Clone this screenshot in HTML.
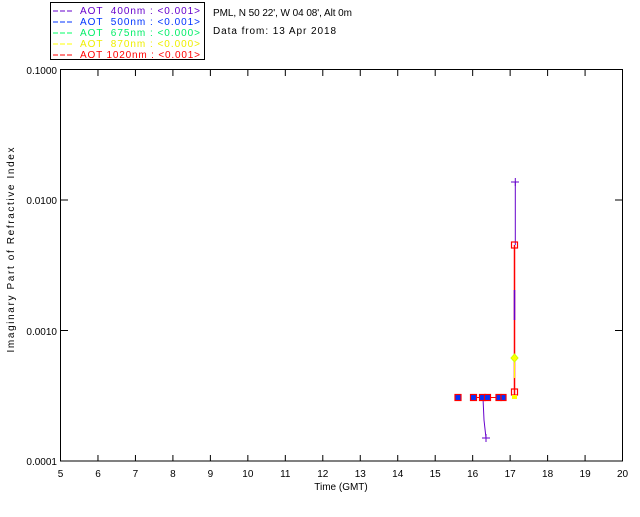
<!DOCTYPE html>
<html><head><style>
body{margin:0;background:#fff}
svg text{font-family:"Liberation Sans",sans-serif;font-size:10px;white-space:pre}
</style></head><body>
<svg width="640" height="512" xmlns="http://www.w3.org/2000/svg">
<rect width="640" height="512" fill="#fff"/>
<!-- legend -->
<rect x="50.5" y="2.5" width="154" height="57" fill="none" stroke="#000"/>
<g font-size="10">
<line x1="53" y1="11" x2="74" y2="11" stroke="#6600cc" stroke-dasharray="5,2"/>
<text x="80" y="14" fill="#6600cc" textLength="120" lengthAdjust="spacing">AOT  400nm : &lt;0.001&gt;</text>
<line x1="53" y1="22" x2="74" y2="22" stroke="#0033ff" stroke-dasharray="5,2"/>
<text x="80" y="25" fill="#0033ff" textLength="120" lengthAdjust="spacing">AOT  500nm : &lt;0.001&gt;</text>
<line x1="53" y1="33" x2="74" y2="33" stroke="#00ff66" stroke-dasharray="5,2"/>
<text x="80" y="36" fill="#00ee66" textLength="120" lengthAdjust="spacing">AOT  675nm : &lt;0.000&gt;</text>
<line x1="53" y1="44" x2="74" y2="44" stroke="#ffff00" stroke-dasharray="5,2"/>
<text x="80" y="47" fill="#eeee00" textLength="120" lengthAdjust="spacing">AOT  870nm : &lt;0.000&gt;</text>
<line x1="53" y1="55" x2="74" y2="55" stroke="#ff0000" stroke-dasharray="5,2"/>
<text x="80" y="58" fill="#ff0000" textLength="120" lengthAdjust="spacing">AOT 1020nm : &lt;0.001&gt;</text>
</g>
<text x="213" y="16" textLength="139" lengthAdjust="spacing">PML, N 50 22', W 04 08', Alt 0m</text>
<text x="213" y="34" textLength="123" lengthAdjust="spacing">Data from: 13 Apr 2018</text>
<!-- axes -->
<rect x="60.5" y="69.5" width="562" height="391.5" fill="none" stroke="#000"/>
<g stroke="#000">
<line x1="60.5" y1="200" x2="68" y2="200"/><line x1="60.5" y1="330.5" x2="68" y2="330.5"/>
<line x1="615" y1="200" x2="622.5" y2="200"/><line x1="615" y1="330.5" x2="622.5" y2="330.5"/>
</g>
<g font-size="10" text-anchor="end">
<text x="57" y="74">0.1000</text><text x="57" y="204">0.0100</text>
<text x="57" y="335">0.0010</text><text x="57" y="465">0.0001</text>
</g>
<g stroke="#000">
<path d="M97.97 461V455M135.44 461V455M172.91 461V455M210.38 461V455M247.85 461V455M285.32 461V455M322.79 461V455M360.26 461V455M397.73 461V455M435.2 461V455M472.67 461V455M510.14 461V455M547.61 461V455M585.08 461V455"/>
<path d="M97.97 69.5V76M135.44 69.5V76M172.91 69.5V76M210.38 69.5V76M247.85 69.5V76M285.32 69.5V76M322.79 69.5V76M360.26 69.5V76M397.73 69.5V76M435.2 69.5V76M472.67 69.5V76M510.14 69.5V76M547.61 69.5V76M585.08 69.5V76"/>
</g>
<g font-size="10" text-anchor="middle">
<text x="60.5" y="477">5</text><text x="97.97" y="477">6</text><text x="135.44" y="477">7</text><text x="172.91" y="477">8</text><text x="210.38" y="477">9</text><text x="247.85" y="477">10</text><text x="285.32" y="477">11</text><text x="322.79" y="477">12</text><text x="360.26" y="477">13</text><text x="397.73" y="477">14</text><text x="435.2" y="477">15</text><text x="472.67" y="477">16</text><text x="510.14" y="477">17</text><text x="547.61" y="477">18</text><text x="585.08" y="477">19</text><text x="622.5" y="477">20</text>
</g>
<text x="341" y="490" text-anchor="middle">Time (GMT)</text>
<text transform="translate(14,250) rotate(-90)" text-anchor="middle" textLength="205" lengthAdjust="spacing">Imaginary Part of Refractive Index</text>
<!-- data -->
<line x1="515.3" y1="182" x2="515.3" y2="245" stroke="#6600cc"/>
<line x1="514.5" y1="245" x2="514.5" y2="397" stroke="#ff0000" stroke-width="1.5"/>
<line x1="514.5" y1="290" x2="514.5" y2="320" stroke="#6600cc" stroke-width="1.5"/>
<line x1="514.5" y1="358" x2="514.5" y2="378" stroke="#ffff00"/>
<polyline points="483,398 484,420 486,438" fill="none" stroke="#6600cc"/>
<line x1="473" y1="397.5" x2="500" y2="397.5" stroke="#ff0000"/>
<g stroke="#6600cc"><line x1="511" y1="182" x2="519" y2="182"/><line x1="515.3" y1="178" x2="515.3" y2="186"/>
<line x1="482" y1="438" x2="490" y2="438"/><line x1="486" y1="434" x2="486" y2="442"/></g>
<g fill="#0033ff" stroke="#ff0000" stroke-width="1.2">
<rect x="455" y="394.5" width="6" height="6"/><rect x="470.5" y="394.5" width="6" height="6"/>
<rect x="479.5" y="394.5" width="6" height="6"/><rect x="484.5" y="394.5" width="6" height="6"/>
<rect x="496" y="394.5" width="5" height="6"/><rect x="501" y="394.5" width="5" height="6"/>
</g>
<rect x="511.5" y="242" width="6" height="6" fill="none" stroke="#ff0000" stroke-width="1.2"/>
<rect x="511.5" y="389" width="6" height="6" fill="none" stroke="#ff0000" stroke-width="1.2"/>
<polygon points="514.5,354 518,358 514.5,362 511,358" fill="#ffff00" stroke="#ccff00"/>
<rect x="512" y="395" width="5" height="4" fill="#ffff00"/>
</svg>
</body></html>
